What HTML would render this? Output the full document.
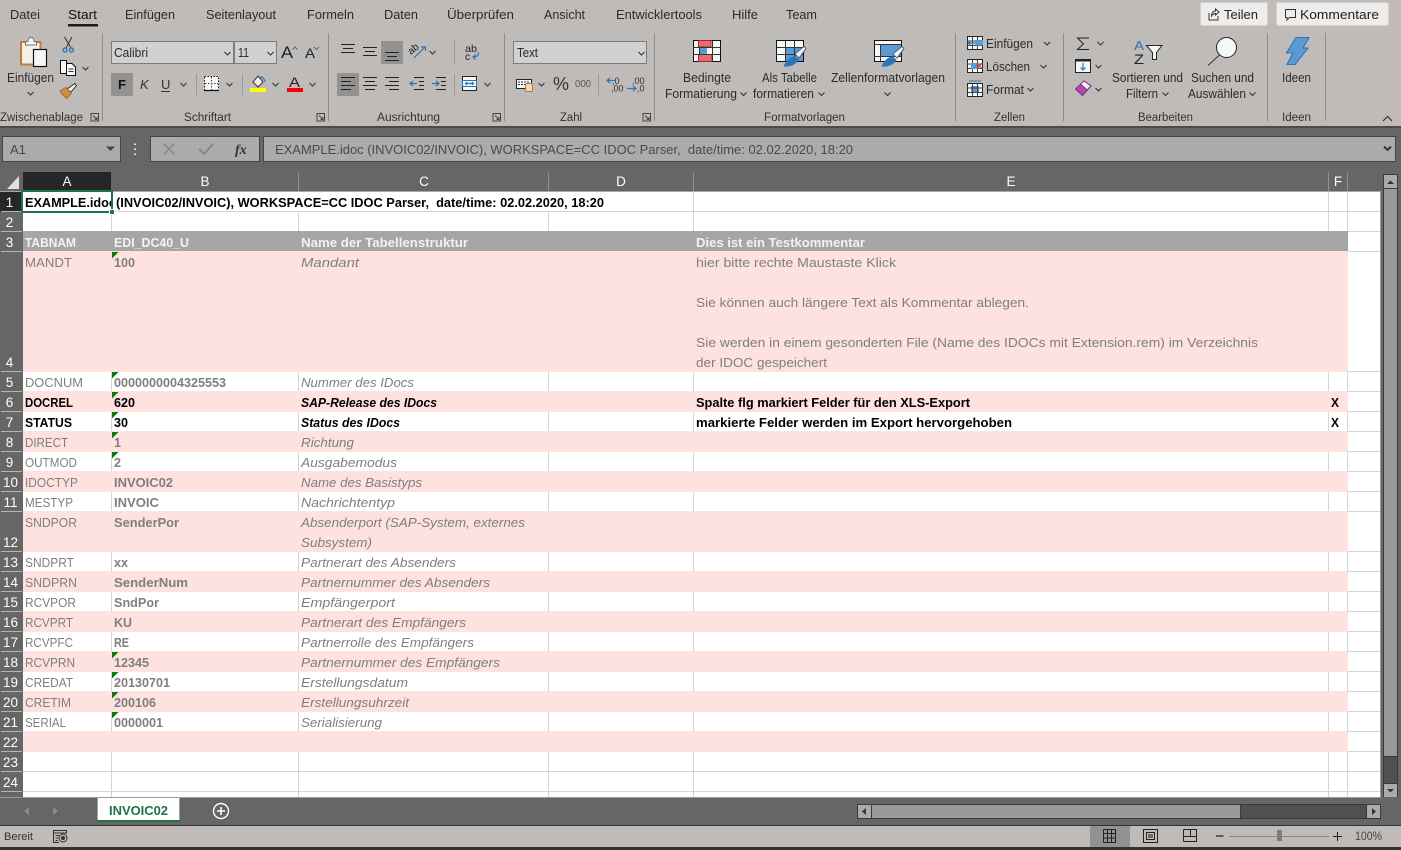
<!DOCTYPE html>
<html lang="de"><head><meta charset="utf-8"><title>Excel</title>
<style>
html,body{margin:0;padding:0;width:1401px;height:850px;overflow:hidden;background:#666}
svg{display:block}
text{font-family:"Liberation Sans",sans-serif;white-space:pre}
.r{font-size:12.5px;fill:#2b2b2b}
.g{font-size:11.5px;fill:#333}
.h{font-size:13.5px;fill:#fff}
.a{font-size:13px;fill:#7f7f7f}
.b{font-size:13px;fill:#7f7f7f;font-weight:bold}
.i{font-size:13px;fill:#7f7f7f;font-style:italic}
.e{font-size:13px;fill:#7f7f7f}
.ka{font-size:13px;fill:#000;font-weight:bold}
.ki{font-size:13px;fill:#000;font-weight:bold;font-style:italic}
.t{font-size:13px;fill:#f2f2f2;font-weight:bold}
.s{fill:none;stroke:#222;stroke-width:1}
.sb{fill:none;stroke:#2f75b5;stroke-width:1.2}
</style></head><body>
<svg width="1401" height="850" viewBox="0 0 1401 850" xmlns="http://www.w3.org/2000/svg">
<defs>
<path id="c" d="M-3-1.500 0 1.500 3-1.500" fill="none" stroke="#333" stroke-width="1.100"/>
<path id="dl" d="M0 0H7.500V7.500H0ZM2 2 6 6M3.500 6H6V3.500" fill="none" stroke="#444" stroke-width="1"/>
<path id="tri" d="M0 0H6.500L0 6.500Z" fill="#0b7a0b"/>
</defs>

<!-- ribbon -->
<rect width="1401" height="127" fill="#bfbbb8"/>
<text class="r" x="10" y="19" textLength="30" lengthAdjust="spacingAndGlyphs">Datei</text>
<text class="r" x="68" y="19" textLength="29" lengthAdjust="spacingAndGlyphs" style="fill:#111">Start</text>
<rect x="68" y="24" width="30" height="2.500" fill="#1a1a1a"/>
<text class="r" x="125" y="19" textLength="50" lengthAdjust="spacingAndGlyphs">Einfügen</text>
<text class="r" x="206" y="19" textLength="70" lengthAdjust="spacingAndGlyphs">Seitenlayout</text>
<text class="r" x="307" y="19" textLength="47" lengthAdjust="spacingAndGlyphs">Formeln</text>
<text class="r" x="384" y="19" textLength="34" lengthAdjust="spacingAndGlyphs">Daten</text>
<text class="r" x="447" y="19" textLength="67" lengthAdjust="spacingAndGlyphs">Überprüfen</text>
<text class="r" x="544" y="19" textLength="41" lengthAdjust="spacingAndGlyphs">Ansicht</text>
<text class="r" x="616" y="19" textLength="86" lengthAdjust="spacingAndGlyphs">Entwicklertools</text>
<text class="r" x="732" y="19" textLength="26" lengthAdjust="spacingAndGlyphs">Hilfe</text>
<text class="r" x="786" y="19" textLength="31" lengthAdjust="spacingAndGlyphs">Team</text>

<rect x="1200.500" y="2.500" width="67" height="23" rx="2" fill="#efedec" stroke="#d5d2d0"/>
<path d="M1209 13V20H1218V16M1211.500 16C1211.500 13 1213 11 1215.500 11V9L1219 12 1215.500 15V13.500C1214 13.500 1212.500 14.500 1211.500 16Z" fill="none" stroke="#333"/>
<text class="r" x="1224" y="19" textLength="34" lengthAdjust="spacingAndGlyphs" style="fill:#222">Teilen</text>
<rect x="1276.500" y="2.500" width="112" height="23" rx="2" fill="#efedec" stroke="#d5d2d0"/>
<path d="M1285.500 9.500H1295.500V17.500H1289.500L1287 20V17.500H1285.500Z" fill="none" stroke="#333"/>
<text class="r" x="1300" y="19" textLength="79" lengthAdjust="spacingAndGlyphs" style="fill:#222">Kommentare</text>

<!-- group separators -->
<path d="M102.500 33V121M328.500 33V121M504.500 33V121M654.500 33V121M955.500 33V121M1063.500 33V121M1267.500 33V121M1325.500 33V121" stroke="#8f8c8a"/>

<!-- group labels -->
<text class="g" x="0" y="121" textLength="83" lengthAdjust="spacingAndGlyphs">Zwischenablage</text>
<text class="g" x="184" y="121" textLength="47" lengthAdjust="spacingAndGlyphs">Schriftart</text>
<text class="g" x="377" y="121" textLength="63" lengthAdjust="spacingAndGlyphs">Ausrichtung</text>
<text class="g" x="560" y="121" textLength="22" lengthAdjust="spacingAndGlyphs">Zahl</text>
<text class="g" x="764" y="121" textLength="81" lengthAdjust="spacingAndGlyphs">Formatvorlagen</text>
<text class="g" x="994" y="121" textLength="31" lengthAdjust="spacingAndGlyphs">Zellen</text>
<text class="g" x="1138" y="121" textLength="55" lengthAdjust="spacingAndGlyphs">Bearbeiten</text>
<text class="g" x="1282" y="121" textLength="29" lengthAdjust="spacingAndGlyphs">Ideen</text>
<use href="#dl" x="91" y="113.500"/><use href="#dl" x="317" y="113.500"/><use href="#dl" x="493" y="113.500"/><use href="#dl" x="643" y="113.500"/>
<path d="M1383 121 1387.500 116.500 1392 121" fill="none" stroke="#333" stroke-width="1.200"/>

<!-- clipboard -->
<rect x="21" y="42" width="19.500" height="22.500" fill="#f5efe4" stroke="#c47a3a" stroke-width="2"/>
<path d="M25.500 45V41.500H28C28 39 29 37.500 31 37.500S34 39 34 41.500H36.500V45Z" fill="#f4f4f4" stroke="#777"/>
<rect x="33.500" y="49.500" width="13" height="17" fill="#f4f8f8" stroke="#111" stroke-width="1.200"/>
<text class="r" x="7" y="82" textLength="47" lengthAdjust="spacingAndGlyphs">Einfügen</text>
<use href="#c" x="30.500" y="93.500"/>
<!-- scissors -->
<path d="M64.500 37 71 48M72 37 66 48" stroke="#333" fill="none"/><circle cx="65" cy="50" r="2" fill="none" stroke="#2f75b5" stroke-width="1.400"/><circle cx="71.500" cy="50" r="2" fill="none" stroke="#2f75b5" stroke-width="1.400"/>
<!-- copy -->
<path d="M60.500 60.500H66.500V73.500H60.500Z" fill="#f4f8f8" stroke="#111"/><path d="M66.500 63.500H72L75.500 67V75.500H66.500Z" fill="#f4f8f8" stroke="#111"/><path d="M68.500 69H73.500M68.500 71.500H73.500" stroke="#333"/>
<use href="#c" x="85.500" y="68.500"/>
<!-- painter -->
<path d="M67 89 75 83.500 76.500 85.500 71 92Z" fill="#f0f0f0" stroke="#222" stroke-width=".9"/><path d="M60 91 66 87.500 71.500 93 67 98.500C64 97 62 94 60 91Z" fill="#d18a46" stroke="#a3622a" stroke-width=".8"/>

<!-- font boxes -->
<rect x="111.500" y="41.500" width="122" height="22" fill="#d1d1d1" stroke="#7c7c7c"/>
<rect x="234.500" y="41.500" width="42" height="22" fill="#d1d1d1" stroke="#7c7c7c"/>
<text class="r" x="114" y="57" textLength="34" lengthAdjust="spacingAndGlyphs">Calibri</text>
<text class="r" x="238" y="57" textLength="11" lengthAdjust="spacingAndGlyphs">11</text>
<use href="#c" x="227.500" y="53.500"/><use href="#c" x="270.500" y="53.500"/>
<text x="281" y="58" style="font-size:17px;fill:#222" textLength="12" lengthAdjust="spacingAndGlyphs">A</text>
<path d="M292.500 49.500 295 47 297.500 49.500" fill="none" stroke="#2f75b5"/>
<text x="305" y="58" style="font-size:14px;fill:#222" textLength="10" lengthAdjust="spacingAndGlyphs">A</text>
<path d="M314 47 316.500 49.500 319 47" fill="none" stroke="#2f75b5"/>
<rect x="111" y="73" width="22" height="23" fill="#939290"/>
<text x="118" y="89" style="font-size:13px;font-weight:bold;fill:#111">F</text>
<text x="140" y="89" style="font-size:13px;font-style:italic;fill:#333">K</text>
<text x="161" y="89" style="font-size:13px;fill:#333">U</text><rect x="161" y="91" width="9" height="1" fill="#333"/>
<use href="#c" x="183.500" y="84.500"/>
<path d="M196.500 74V95M242.500 74V95" stroke="#9c9997"/>
<rect x="204.500" y="76.500" width="14" height="14" fill="#f4f8f8" stroke="#222" stroke-dasharray="1.500 1.500"/>
<path d="M204 90.500H219" stroke="#111" stroke-width="1.200"/><path d="M211.500 77V90M205 83.500H218" stroke="#444" stroke-dasharray="1.500 1.500"/>
<use href="#c" x="229.500" y="84.500"/>
<!-- fill -->
<path d="M253 82 258 76 263 82 258 87Z" fill="#f5f5f5" stroke="#333"/><path d="M260 78C262 76 264 78 265 82" fill="none" stroke="#2f75b5" stroke-width="1.300"/>
<rect x="250" y="88" width="16" height="4" fill="#ffff00"/>
<use href="#c" x="275.500" y="84.500"/>
<text x="289" y="87" style="font-size:14px;fill:#222" textLength="11" lengthAdjust="spacingAndGlyphs">A</text>
<rect x="287" y="88" width="16" height="4" fill="#ff0000"/>
<use href="#c" x="312.500" y="84.500"/>

<!-- alignment -->
<rect x="381" y="41" width="22" height="23" fill="#939290"/>
<rect x="337" y="73" width="22" height="23" fill="#939290"/>
<path class="s" d="M341 44.500H355M343 48.500H353M341 52.500H355"/>
<path class="s" d="M363 47.500H377M365 51.500H375M363 55.500H377"/>
<path class="s" d="M385 52.500H399M387 56.500H397M385 60.500H399"/>
<path class="s" d="M341 77.500H355M341 81.500H351M341 85.500H355M341 89.500H351"/>
<path class="s" d="M363 77.500H377M365 81.500H375M363 85.500H377M365 89.500H375"/>
<path class="s" d="M385 77.500H399M389 81.500H399M385 85.500H399M389 89.500H399"/>
<path class="s" d="M414 77.500H424M419 81.500H424M419 85.500H424M414 89.500H424"/>
<path class="sb" d="M417 83.500H410M413 81 410 83.500 413 86"/>
<path class="s" d="M436 77.500H446M441 81.500H446M441 85.500H446M436 89.500H446"/>
<path class="sb" d="M432 83.500H439M436 81 439 83.500 436 86"/>
<text x="411" y="55" style="font-size:10px;fill:#222" transform="rotate(-40 411 55)">ab</text>
<path class="sb" d="M414 58 425 47M421 47H425.500V51"/>
<use href="#c" x="432.500" y="52.500"/>
<path d="M454.500 39V65M454.500 74V95" stroke="#9c9997"/>
<text x="465" y="52" style="font-size:10.500px;fill:#222" textLength="12" lengthAdjust="spacingAndGlyphs">ab</text><text x="465" y="60" style="font-size:10.500px;fill:#222">c</text>
<path class="sb" d="M478 52C479.500 55 477 57 473 57M475.500 54.500 473 57 475.500 59.500"/>
<rect x="462.500" y="76.500" width="14" height="14" fill="#f4f8f8" stroke="#222"/><path d="M463 80.500H476M463 86.500H476" stroke="#222"/><rect x="462.500" y="80.500" width="14" height="6" fill="#f4f8f8" stroke="#2f75b5"/>
<path class="sb" d="M465.500 83.500H473.500M467 82 465.500 83.500 467 85M472 82 473.500 83.500 472 85" stroke-width="1"/>
<use href="#c" x="487.500" y="84.500"/>

<!-- number -->
<rect x="513.500" y="41.500" width="133" height="22" fill="#d1d1d1" stroke="#7c7c7c"/>
<text class="r" x="517" y="57" textLength="21" lengthAdjust="spacingAndGlyphs">Text</text>
<use href="#c" x="641.500" y="53.500"/>
<rect x="516.500" y="79.500" width="15" height="9" fill="#f4f8f8" stroke="#222"/><path d="M518 82H530M518 84.500H530" stroke="#333" stroke-dasharray="2 1"/>
<rect x="525.500" y="83.500" width="7" height="8" rx="1.500" fill="#eadcc4" stroke="#c0702c"/>
<use href="#c" x="541.500" y="84.500"/>
<text x="553" y="90" style="font-size:18px;fill:#333" textLength="16" lengthAdjust="spacingAndGlyphs">%</text>
<text x="575" y="87" style="font-size:10px;fill:#555" textLength="16" lengthAdjust="spacingAndGlyphs">000</text>
<path d="M598.500 74V95" stroke="#9c9997"/>
<text x="612" y="84" style="font-size:9px;fill:#333">,0</text><text x="611" y="91.500" style="font-size:9px;fill:#333">,00</text>
<path class="sb" d="M615 80.500H607M610 78 607 80.500 610 83"/>
<text x="632" y="84" style="font-size:9px;fill:#333">,00</text><text x="637" y="91.500" style="font-size:9px;fill:#333">,0</text>
<path class="sb" d="M627 88.500H636M633 86 636 88.500 633 91"/>

<!-- Formatvorlagen icons -->
<rect x="693.500" y="40.500" width="27" height="21" fill="#f4f8f8" stroke="#111"/>
<path d="M698.500 40.500H711V47H698.500ZM698.500 54.500H712V61.500H698.500Z" fill="#e07070" stroke="#b22222"/>
<rect x="699" y="48" width="8" height="6" fill="#5b9bd5"/>
<path d="M699.500 47V54M712.500 41V61M693 47.500H721M693 54.500H721" stroke="#333" fill="none"/>
<text class="r" x="683" y="82" textLength="48" lengthAdjust="spacingAndGlyphs">Bedingte</text>
<text class="r" x="665" y="98" textLength="72" lengthAdjust="spacingAndGlyphs">Formatierung</text>
<use href="#c" x="743.500" y="94"/>
<rect x="776.500" y="40.500" width="27" height="21" fill="#f4f8f8" stroke="#111"/>
<rect x="785" y="47" width="18" height="14" fill="#5b9bd5"/>
<path d="M785.500 41V61M794.500 41V61M777 47.500H803M777 54.500H803" stroke="#333" fill="none"/>
<path d="M795 54 804 46.500 806 48.500 799 58Z" fill="#f0f4f6" stroke="#444" stroke-width=".8"/>
<path d="M783.500 66.500C786 61 790 56.500 794.500 56.500L798.500 59.500C797 64 790 67.500 783.500 66.500Z" fill="#2f75b5"/>
<text class="r" x="762" y="82" textLength="55" lengthAdjust="spacingAndGlyphs">Als Tabelle</text>
<text class="r" x="753" y="98" textLength="61" lengthAdjust="spacingAndGlyphs">formatieren</text>
<use href="#c" x="821.500" y="94"/>
<rect x="874.500" y="40.500" width="27" height="21" fill="#f4f8f8" stroke="#111"/>
<rect x="880" y="45" width="21" height="11.500" fill="#5b9bd5"/>
<path d="M874 44.500H902M880.500 44V62M874 56.500H902" stroke="#333" fill="none"/>
<path d="M893 54 902 46.500 904 48.500 897 58Z" fill="#f0f4f6" stroke="#444" stroke-width=".8"/>
<path d="M881.500 66.500C884 61 888 56.500 892.500 56.500L896.500 59.500C895 64 888 67.500 881.500 66.500Z" fill="#2f75b5"/>
<text class="r" x="831" y="82" textLength="114" lengthAdjust="spacingAndGlyphs">Zellenformatvorlagen</text>
<use href="#c" x="887.500" y="94"/>

<!-- Zellen -->
<rect x="967.500" y="36.500" width="15" height="13" fill="#f4f8f8" stroke="#222"/><path d="M967 41H983M967 45.500H983M972.500 37V49M977.500 37V49" stroke="#444"/>
<rect x="975" y="40" width="8" height="5.500" fill="#5b9bd5"/><path d="M975 43H968M971 40.500 968 43 971 45.500" fill="none" stroke="#2f75b5" stroke-width="1.200"/>
<text class="r" x="986" y="48" textLength="47" lengthAdjust="spacingAndGlyphs">Einfügen</text>
<use href="#c" x="1047" y="43.500"/>
<rect x="967.500" y="59.500" width="15" height="13" fill="#f4f8f8" stroke="#222"/><path d="M967 64H983M967 68.500H983M972.500 60V72M977.500 60V72" stroke="#444"/>
<rect x="971" y="63" width="6" height="6" fill="#5b9bd5"/><path d="M977 63 982 69M982 63 977 69" stroke="#e04040" stroke-width="1.300"/>
<text class="r" x="986" y="71" textLength="44" lengthAdjust="spacingAndGlyphs">Löschen</text>
<use href="#c" x="1043.500" y="66.500"/>
<rect x="967.500" y="83.500" width="15" height="13" fill="#f4f8f8" stroke="#222"/><rect x="971" y="86" width="8" height="7" fill="#5b9bd5"/><path d="M967 88H983M967 92.500H983M972.500 84V96M977.500 84V96" stroke="#444"/>
<path d="M969 81H981" stroke="#2f75b5"/>
<text class="r" x="986" y="94" textLength="38" lengthAdjust="spacingAndGlyphs">Format</text>
<use href="#c" x="1030.500" y="89.500"/>

<!-- Bearbeiten -->
<path d="M1089 38H1077.500L1083.500 44 1077.500 49.500H1089" fill="none" stroke="#222"/>
<use href="#c" x="1100.500" y="43.500"/>
<rect x="1075.500" y="59.500" width="15" height="13" fill="#f4f8f8" stroke="#222"/><path d="M1076 60.500H1091" stroke="#222" stroke-width="2"/><path class="sb" d="M1083 63V70M1080.500 67.500 1083 70 1085.500 67.500"/>
<use href="#c" x="1098.500" y="66.500"/>
<path d="M1075.500 89 1084 81 1091 86 1082.500 95.500Z" fill="#b04cb0" stroke="#7a2e8a"/><path d="M1080.500 84 1084 81 1091 86 1087 90Z" fill="#f4f4f4" stroke="#7a2e8a"/>
<use href="#c" x="1098.500" y="89.500"/>
<text x="1134" y="50" style="font-size:13px;fill:#2f75b5" textLength="10" lengthAdjust="spacingAndGlyphs">A</text>
<text x="1134" y="64" style="font-size:14px;fill:#222" textLength="10" lengthAdjust="spacingAndGlyphs">Z</text>
<path d="M1146.500 45.500H1162L1156.500 52.500V59.500H1152.500V52.500Z" fill="#f4f8f8" stroke="#222"/>
<text class="r" x="1112" y="82" textLength="71" lengthAdjust="spacingAndGlyphs">Sortieren und</text>
<text class="r" x="1126" y="98" textLength="32" lengthAdjust="spacingAndGlyphs">Filtern</text>
<use href="#c" x="1165.500" y="94"/>
<circle cx="1226.500" cy="47.500" r="10" fill="#f4f8f8" stroke="#222"/><path d="M1219.500 55 1208 65.500" stroke="#333"/>
<text class="r" x="1191" y="82" textLength="63" lengthAdjust="spacingAndGlyphs">Suchen und</text>
<text class="r" x="1188" y="98" textLength="58" lengthAdjust="spacingAndGlyphs">Auswählen</text>
<use href="#c" x="1252.500" y="94"/>
<path d="M1296 37.500H1309L1303 48H1308L1295 64.500H1287L1293 53H1286.500Z" fill="#5b9bd5" stroke="#2f75b5" stroke-width="1.100"/>
<text class="r" x="1282" y="82" textLength="29" lengthAdjust="spacingAndGlyphs">Ideen</text>

<!-- formula bar -->
<rect y="126" width="1401" height="46" fill="#666"/>
<rect y="126" width="1401" height="2" fill="#4b4b4b"/>
<rect x="2.500" y="136.500" width="118" height="25" fill="#ababab" stroke="#444"/>
<text x="10" y="154" style="font-size:13px;fill:#444">A1</text>
<path d="M106 146.500H115L110.500 151Z" fill="#444"/>
<path d="M135 143.500V145M135 148.500V150M135 153.500V155" stroke="#e8e8e8" stroke-width="2"/>
<rect x="150.500" y="136.500" width="109" height="25" fill="#ababab" stroke="#444"/>
<path d="M164 144 174 154M174 144 164 154" stroke="#868686" stroke-width="1.500"/>
<path d="M199 149 204 154 213 144" fill="none" stroke="#868686" stroke-width="2"/>
<text x="235" y="154" style="font-family:'Liberation Serif',serif;font-size:14px;font-style:italic;font-weight:bold;fill:#333">fx</text>
<rect x="263.500" y="136.500" width="1132" height="25" fill="#ababab" stroke="#444"/>
<text x="275" y="154" style="font-size:13px;fill:#4a4a4a" textLength="578" lengthAdjust="spacingAndGlyphs">EXAMPLE.idoc (INVOIC02/INVOIC), WORKSPACE=CC IDOC Parser,  date/time: 02.02.2020, 18:20</text>
<path d="M1384 146.500 1387.500 150 1391 146.500" fill="none" stroke="#333" stroke-width="2"/>

<!-- sheet -->
<rect x="23" y="192" width="1358" height="605" fill="#fff"/>
<!-- horizontal gridlines -->
<path d="M23 211.500H1381M23 231.500H1381M23 251.500H1381M23 371.500H1381M23 391.500H1381M23 411.500H1381M23 431.500H1381M23 451.500H1381M23 471.500H1381M23 491.500H1381M23 511.500H1381M23 551.500H1381M23 571.500H1381M23 591.500H1381M23 611.500H1381M23 631.500H1381M23 651.500H1381M23 671.500H1381M23 691.500H1381M23 711.500H1381M23 731.500H1381M23 751.500H1381M23 771.500H1381M23 791.500H1381" stroke="#d4d4d4"/>
<!-- vertical gridlines -->
<path d="M111.500 192V797M298.500 192V797M548.500 192V797M693.500 192V797M1328.500 192V797M1347.500 192V797" stroke="#d4d4d4"/>
<rect x="112" y="192" width="581" height="19" fill="#fff"/>
<!-- fills -->
<g fill="#fde2df">
<rect x="23" y="251" width="1325" height="121"/>
<rect x="23" y="391" width="1325" height="21"/>
<rect x="23" y="431" width="1325" height="21"/>
<rect x="23" y="471" width="1325" height="21"/>
<rect x="23" y="511" width="1325" height="41"/>
<rect x="23" y="571" width="1325" height="21"/>
<rect x="23" y="611" width="1325" height="21"/>
<rect x="23" y="651" width="1325" height="21"/>
<rect x="23" y="691" width="1325" height="21"/>
<rect x="23" y="731" width="1325" height="21"/>
</g>
<rect x="23" y="231" width="1325" height="20" fill="#a6a6a6"/>

<!-- headers -->
<rect x="0" y="172" width="1381" height="20" fill="#666"/>
<rect x="0" y="192" width="23" height="605" fill="#666"/>
<rect x="23" y="172" width="88" height="20" fill="#262626"/>
<rect x="0" y="192" width="23" height="20" fill="#262626"/>
<path d="M19 176V189H7Z" fill="#e0e0e0"/>
<path d="M298.500 172V191M548.500 172V191M693.500 172V191M1328.500 172V191M1347.500 172V191" stroke="#909090"/>
<path d="M1 211.500H22M1 231.500H22M1 251.500H22M1 371.500H22M1 391.500H22M1 411.500H22M1 431.500H22M1 451.500H22M1 471.500H22M1 491.500H22M1 511.500H22M1 551.500H22M1 571.500H22M1 591.500H22M1 611.500H22M1 631.500H22M1 651.500H22M1 671.500H22M1 691.500H22M1 711.500H22M1 731.500H22M1 751.500H22M1 771.500H22M1 791.500H22" stroke="#b5b5b5"/>
<rect x="0" y="191" width="1381" height="1" fill="#a6a6a6"/>
<g text-anchor="middle">
<text class="h" x="67" y="186">A</text><text class="h" x="205" y="186">B</text><text class="h" x="424" y="186">C</text><text class="h" x="621" y="186">D</text><text class="h" x="1011" y="186">E</text><text class="h" x="1338" y="186">F</text>
</g>
<g text-anchor="middle">
<text class="h" x="9.500" y="207">1</text><text class="h" x="9.500" y="227">2</text><text class="h" x="9.500" y="247">3</text><text class="h" x="9.500" y="367">4</text><text class="h" x="9.500" y="387">5</text><text class="h" x="9.500" y="407">6</text><text class="h" x="9.500" y="427">7</text><text class="h" x="9.500" y="447">8</text><text class="h" x="9.500" y="467">9</text>
<text class="h" x="10.500" y="487">10</text><text class="h" x="10.500" y="507">11</text><text class="h" x="10.500" y="547">12</text><text class="h" x="10.500" y="567">13</text><text class="h" x="10.500" y="587">14</text><text class="h" x="10.500" y="607">15</text><text class="h" x="10.500" y="627">16</text><text class="h" x="10.500" y="647">17</text><text class="h" x="10.500" y="667">18</text><text class="h" x="10.500" y="687">19</text><text class="h" x="10.500" y="707">20</text><text class="h" x="10.500" y="727">21</text><text class="h" x="10.500" y="747">22</text><text class="h" x="10.500" y="767">23</text><text class="h" x="10.500" y="787">24</text>
</g>

<!-- cell content -->
<svg x="25" y="192" width="87" height="20"><text class="ka" x="0" y="15" textLength="91" lengthAdjust="spacingAndGlyphs">EXAMPLE.idoc</text></svg>
<text class="ka" x="116" y="207" textLength="488" lengthAdjust="spacingAndGlyphs">(INVOIC02/INVOIC), WORKSPACE=CC IDOC Parser,  date/time: 02.02.2020, 18:20</text>

<text class="t" x="25" y="247" textLength="51" lengthAdjust="spacingAndGlyphs">TABNAM</text>
<text class="t" x="114" y="247" textLength="75" lengthAdjust="spacingAndGlyphs">EDI_DC40_U</text>
<text class="t" x="301" y="247" textLength="167" lengthAdjust="spacingAndGlyphs">Name der Tabellenstruktur</text>
<text class="t" x="696" y="247" textLength="169" lengthAdjust="spacingAndGlyphs">Dies ist ein Testkommentar</text>

<text class="a" x="25" y="267" textLength="47" lengthAdjust="spacingAndGlyphs">MANDT</text>
<text class="b" x="114" y="267" textLength="21" lengthAdjust="spacingAndGlyphs">100</text>
<text class="i" x="301" y="267" textLength="58" lengthAdjust="spacingAndGlyphs">Mandant</text>
<text class="e" x="696" y="267" textLength="200" lengthAdjust="spacingAndGlyphs">hier bitte rechte Maustaste Klick</text>
<text class="e" x="696" y="307" textLength="333" lengthAdjust="spacingAndGlyphs">Sie können auch längere Text als Kommentar ablegen.</text>
<text class="e" x="696" y="347" textLength="562" lengthAdjust="spacingAndGlyphs">Sie werden in einem gesonderten File (Name des IDOCs mit Extension.rem) im Verzeichnis</text>
<text class="e" x="696" y="367" textLength="131" lengthAdjust="spacingAndGlyphs">der IDOC gespeichert</text>

<text class="a" x="25" y="387" textLength="58" lengthAdjust="spacingAndGlyphs">DOCNUM</text>
<text class="b" x="114" y="387" textLength="112" lengthAdjust="spacingAndGlyphs">0000000004325553</text>
<text class="i" x="301" y="387" textLength="113" lengthAdjust="spacingAndGlyphs">Nummer des IDocs</text>

<text class="ka" x="25" y="407" textLength="48" lengthAdjust="spacingAndGlyphs">DOCREL</text>
<text class="ka" x="114" y="407" textLength="21" lengthAdjust="spacingAndGlyphs">620</text>
<text class="ki" x="301" y="407" textLength="136" lengthAdjust="spacingAndGlyphs">SAP-Release des IDocs</text>
<text class="ka" x="696" y="407" textLength="274" lengthAdjust="spacingAndGlyphs">Spalte flg markiert Felder für den XLS-Export</text>
<text class="ka" x="1331" y="407" textLength="8" lengthAdjust="spacingAndGlyphs">X</text>

<text class="ka" x="25" y="427" textLength="47" lengthAdjust="spacingAndGlyphs">STATUS</text>
<text class="ka" x="114" y="427" textLength="14" lengthAdjust="spacingAndGlyphs">30</text>
<text class="ki" x="301" y="427" textLength="99" lengthAdjust="spacingAndGlyphs">Status des IDocs</text>
<text class="ka" x="696" y="427" textLength="316" lengthAdjust="spacingAndGlyphs">markierte Felder werden im Export hervorgehoben</text>
<text class="ka" x="1331" y="427" textLength="8" lengthAdjust="spacingAndGlyphs">X</text>

<text class="a" x="25" y="447" textLength="43" lengthAdjust="spacingAndGlyphs">DIRECT</text>
<text class="b" x="114" y="447" textLength="7" lengthAdjust="spacingAndGlyphs">1</text>
<text class="i" x="301" y="447" textLength="53" lengthAdjust="spacingAndGlyphs">Richtung</text>

<text class="a" x="25" y="467" textLength="52" lengthAdjust="spacingAndGlyphs">OUTMOD</text>
<text class="b" x="114" y="467" textLength="7" lengthAdjust="spacingAndGlyphs">2</text>
<text class="i" x="301" y="467" textLength="96" lengthAdjust="spacingAndGlyphs">Ausgabemodus</text>

<text class="a" x="25" y="487" textLength="53" lengthAdjust="spacingAndGlyphs">IDOCTYP</text>
<text class="b" x="114" y="487" textLength="59" lengthAdjust="spacingAndGlyphs">INVOIC02</text>
<text class="i" x="301" y="487" textLength="121" lengthAdjust="spacingAndGlyphs">Name des Basistyps</text>

<text class="a" x="25" y="507" textLength="48" lengthAdjust="spacingAndGlyphs">MESTYP</text>
<text class="b" x="114" y="507" textLength="45" lengthAdjust="spacingAndGlyphs">INVOIC</text>
<text class="i" x="301" y="507" textLength="94" lengthAdjust="spacingAndGlyphs">Nachrichtentyp</text>

<text class="a" x="25" y="527" textLength="52" lengthAdjust="spacingAndGlyphs">SNDPOR</text>
<text class="b" x="114" y="527" textLength="65" lengthAdjust="spacingAndGlyphs">SenderPor</text>
<text class="i" x="301" y="527" textLength="224" lengthAdjust="spacingAndGlyphs">Absenderport (SAP-System, externes</text>
<text class="i" x="301" y="547" textLength="71" lengthAdjust="spacingAndGlyphs">Subsystem)</text>

<text class="a" x="25" y="567" textLength="49" lengthAdjust="spacingAndGlyphs">SNDPRT</text>
<text class="b" x="114" y="567" textLength="14" lengthAdjust="spacingAndGlyphs">xx</text>
<text class="i" x="301" y="567" textLength="155" lengthAdjust="spacingAndGlyphs">Partnerart des Absenders</text>

<text class="a" x="25" y="587" textLength="52" lengthAdjust="spacingAndGlyphs">SNDPRN</text>
<text class="b" x="114" y="587" textLength="74" lengthAdjust="spacingAndGlyphs">SenderNum</text>
<text class="i" x="301" y="587" textLength="189" lengthAdjust="spacingAndGlyphs">Partnernummer des Absenders</text>

<text class="a" x="25" y="607" textLength="51" lengthAdjust="spacingAndGlyphs">RCVPOR</text>
<text class="b" x="114" y="607" textLength="45" lengthAdjust="spacingAndGlyphs">SndPor</text>
<text class="i" x="301" y="607" textLength="94" lengthAdjust="spacingAndGlyphs">Empfängerport</text>

<text class="a" x="25" y="627" textLength="48" lengthAdjust="spacingAndGlyphs">RCVPRT</text>
<text class="b" x="114" y="627" textLength="18" lengthAdjust="spacingAndGlyphs">KU</text>
<text class="i" x="301" y="627" textLength="165" lengthAdjust="spacingAndGlyphs">Partnerart des Empfängers</text>

<text class="a" x="25" y="647" textLength="48" lengthAdjust="spacingAndGlyphs">RCVPFC</text>
<text class="b" x="114" y="647" textLength="15" lengthAdjust="spacingAndGlyphs">RE</text>
<text class="i" x="301" y="647" textLength="173" lengthAdjust="spacingAndGlyphs">Partnerrolle des Empfängers</text>

<text class="a" x="25" y="667" textLength="50" lengthAdjust="spacingAndGlyphs">RCVPRN</text>
<text class="b" x="114" y="667" textLength="35" lengthAdjust="spacingAndGlyphs">12345</text>
<text class="i" x="301" y="667" textLength="199" lengthAdjust="spacingAndGlyphs">Partnernummer des Empfängers</text>

<text class="a" x="25" y="687" textLength="48" lengthAdjust="spacingAndGlyphs">CREDAT</text>
<text class="b" x="114" y="687" textLength="56" lengthAdjust="spacingAndGlyphs">20130701</text>
<text class="i" x="301" y="687" textLength="107" lengthAdjust="spacingAndGlyphs">Erstellungsdatum</text>

<text class="a" x="25" y="707" textLength="46" lengthAdjust="spacingAndGlyphs">CRETIM</text>
<text class="b" x="114" y="707" textLength="42" lengthAdjust="spacingAndGlyphs">200106</text>
<text class="i" x="301" y="707" textLength="108" lengthAdjust="spacingAndGlyphs">Erstellungsuhrzeit</text>

<text class="a" x="25" y="727" textLength="41" lengthAdjust="spacingAndGlyphs">SERIAL</text>
<text class="b" x="114" y="727" textLength="49" lengthAdjust="spacingAndGlyphs">0000001</text>
<text class="i" x="301" y="727" textLength="81" lengthAdjust="spacingAndGlyphs">Serialisierung</text>

<!-- green triangles -->
<use href="#tri" x="112" y="252"/><use href="#tri" x="112" y="372"/><use href="#tri" x="112" y="392"/><use href="#tri" x="112" y="412"/><use href="#tri" x="112" y="432"/><use href="#tri" x="112" y="452"/><use href="#tri" x="112" y="652"/><use href="#tri" x="112" y="672"/><use href="#tri" x="112" y="692"/><use href="#tri" x="112" y="712"/>

<!-- selection -->
<rect x="22" y="191" width="90" height="21" fill="none" stroke="#217346" stroke-width="2"/>
<rect x="109.500" y="209.500" width="5" height="5" fill="#217346" stroke="#fff"/>

<!-- vertical scrollbar -->
<rect x="1381" y="172" width="20" height="654" fill="#666"/>
<rect x="1380" y="192" width="1" height="605" fill="#9a9a9a"/>
<rect x="1383.500" y="174.500" width="14" height="622" fill="#505050" stroke="#3a3a3a"/>
<rect x="1383.500" y="174.500" width="14" height="14" fill="#ababab" stroke="#3a3a3a"/>
<path d="M1387 184H1394L1390.500 180.500Z" fill="#333"/>
<rect x="1383.500" y="188.500" width="14" height="568" fill="#9a9a9a" stroke="#3a3a3a"/>
<rect x="1383.500" y="783.500" width="14" height="14" fill="#ababab" stroke="#3a3a3a"/>
<path d="M1387 789H1394L1390.500 792.500Z" fill="#333"/>

<!-- tab bar -->
<rect y="797" width="1401" height="29" fill="#666"/>
<rect y="797" width="1381" height="1" fill="#9a9a9a"/>
<path d="M24 811 29 807V815ZM58 811 53 807V815Z" fill="#8c8c8c"/>
<rect x="97" y="798" width="82" height="22" fill="#fff"/>
<rect x="97" y="820" width="83" height="2" fill="#217346"/>
<path d="M97.500 797V820M179.500 797V820" stroke="#a0a0a0"/>
<text x="109" y="815" style="font-size:13px;font-weight:bold;fill:#217346" textLength="59" lengthAdjust="spacingAndGlyphs">INVOIC02</text>
<circle cx="221" cy="811" r="7.500" fill="none" stroke="#fff" stroke-width="1.400"/>
<path d="M217 811H225M221 807V815" stroke="#fff" stroke-width="1.600"/>
<rect x="857.500" y="804.500" width="523" height="14" fill="#505050" stroke="#3a3a3a"/>
<rect x="857.500" y="804.500" width="14" height="14" fill="#ababab" stroke="#3a3a3a"/>
<path d="M862 811.500 866 808V815Z" fill="#333"/>
<rect x="871.500" y="804.500" width="369" height="14" fill="#9a9a9a" stroke="#3a3a3a"/>
<rect x="1366.500" y="804.500" width="14" height="14" fill="#ababab" stroke="#3a3a3a"/>
<path d="M1376 811.500 1372 808V815Z" fill="#333"/>

<!-- status bar -->
<rect y="825" width="1401" height="1" fill="#333"/>
<rect y="826" width="1401" height="21" fill="#bfbbb8"/>
<rect y="847" width="1401" height="3" fill="#333"/>
<text x="4" y="840" style="font-size:11px;fill:#333" textLength="29" lengthAdjust="spacingAndGlyphs">Bereit</text>
<path d="M53.500 830.500H66.500V833H53.500ZM53.500 833V842.500H59M55.500 835.500H59M55.500 838H58M55.500 840.500H58" fill="none" stroke="#333"/>
<circle cx="63" cy="838" r="4" fill="none" stroke="#333"/><circle cx="63" cy="838" r="2" fill="#333"/>
<rect x="1090" y="826" width="40" height="21" fill="#939290"/>
<path d="M1103.500 829.500H1115.500V842.500H1103.500ZM1107.500 830V842M1111.500 830V842M1104 833.500H1115M1104 838H1115" fill="none" stroke="#222"/>
<path d="M1143.500 829.500H1157.500V842.500H1143.500ZM1146.500 832.500H1154.500V839.500H1146.500ZM1148 835H1153M1148 837H1153" fill="none" stroke="#222"/>
<path d="M1183.500 829.500H1196.500V841.500H1183.500M1183.500 836.500H1196.500M1190.500 829.500V836.500M1183.500 829.500V841.500" fill="none" stroke="#222"/>
<path d="M1216 836H1223.500" stroke="#222" stroke-width="1.200"/>
<path d="M1229 836.500H1329" stroke="#8a8785"/>
<rect x="1277" y="830" width="5" height="11" fill="#7f7d7b"/>
<path d="M1333 836.500H1342M1337.500 832V841" stroke="#222"/>
<text x="1355" y="840" style="font-size:11.500px;fill:#444" textLength="27" lengthAdjust="spacingAndGlyphs">100%</text>
</svg>
</body></html>
